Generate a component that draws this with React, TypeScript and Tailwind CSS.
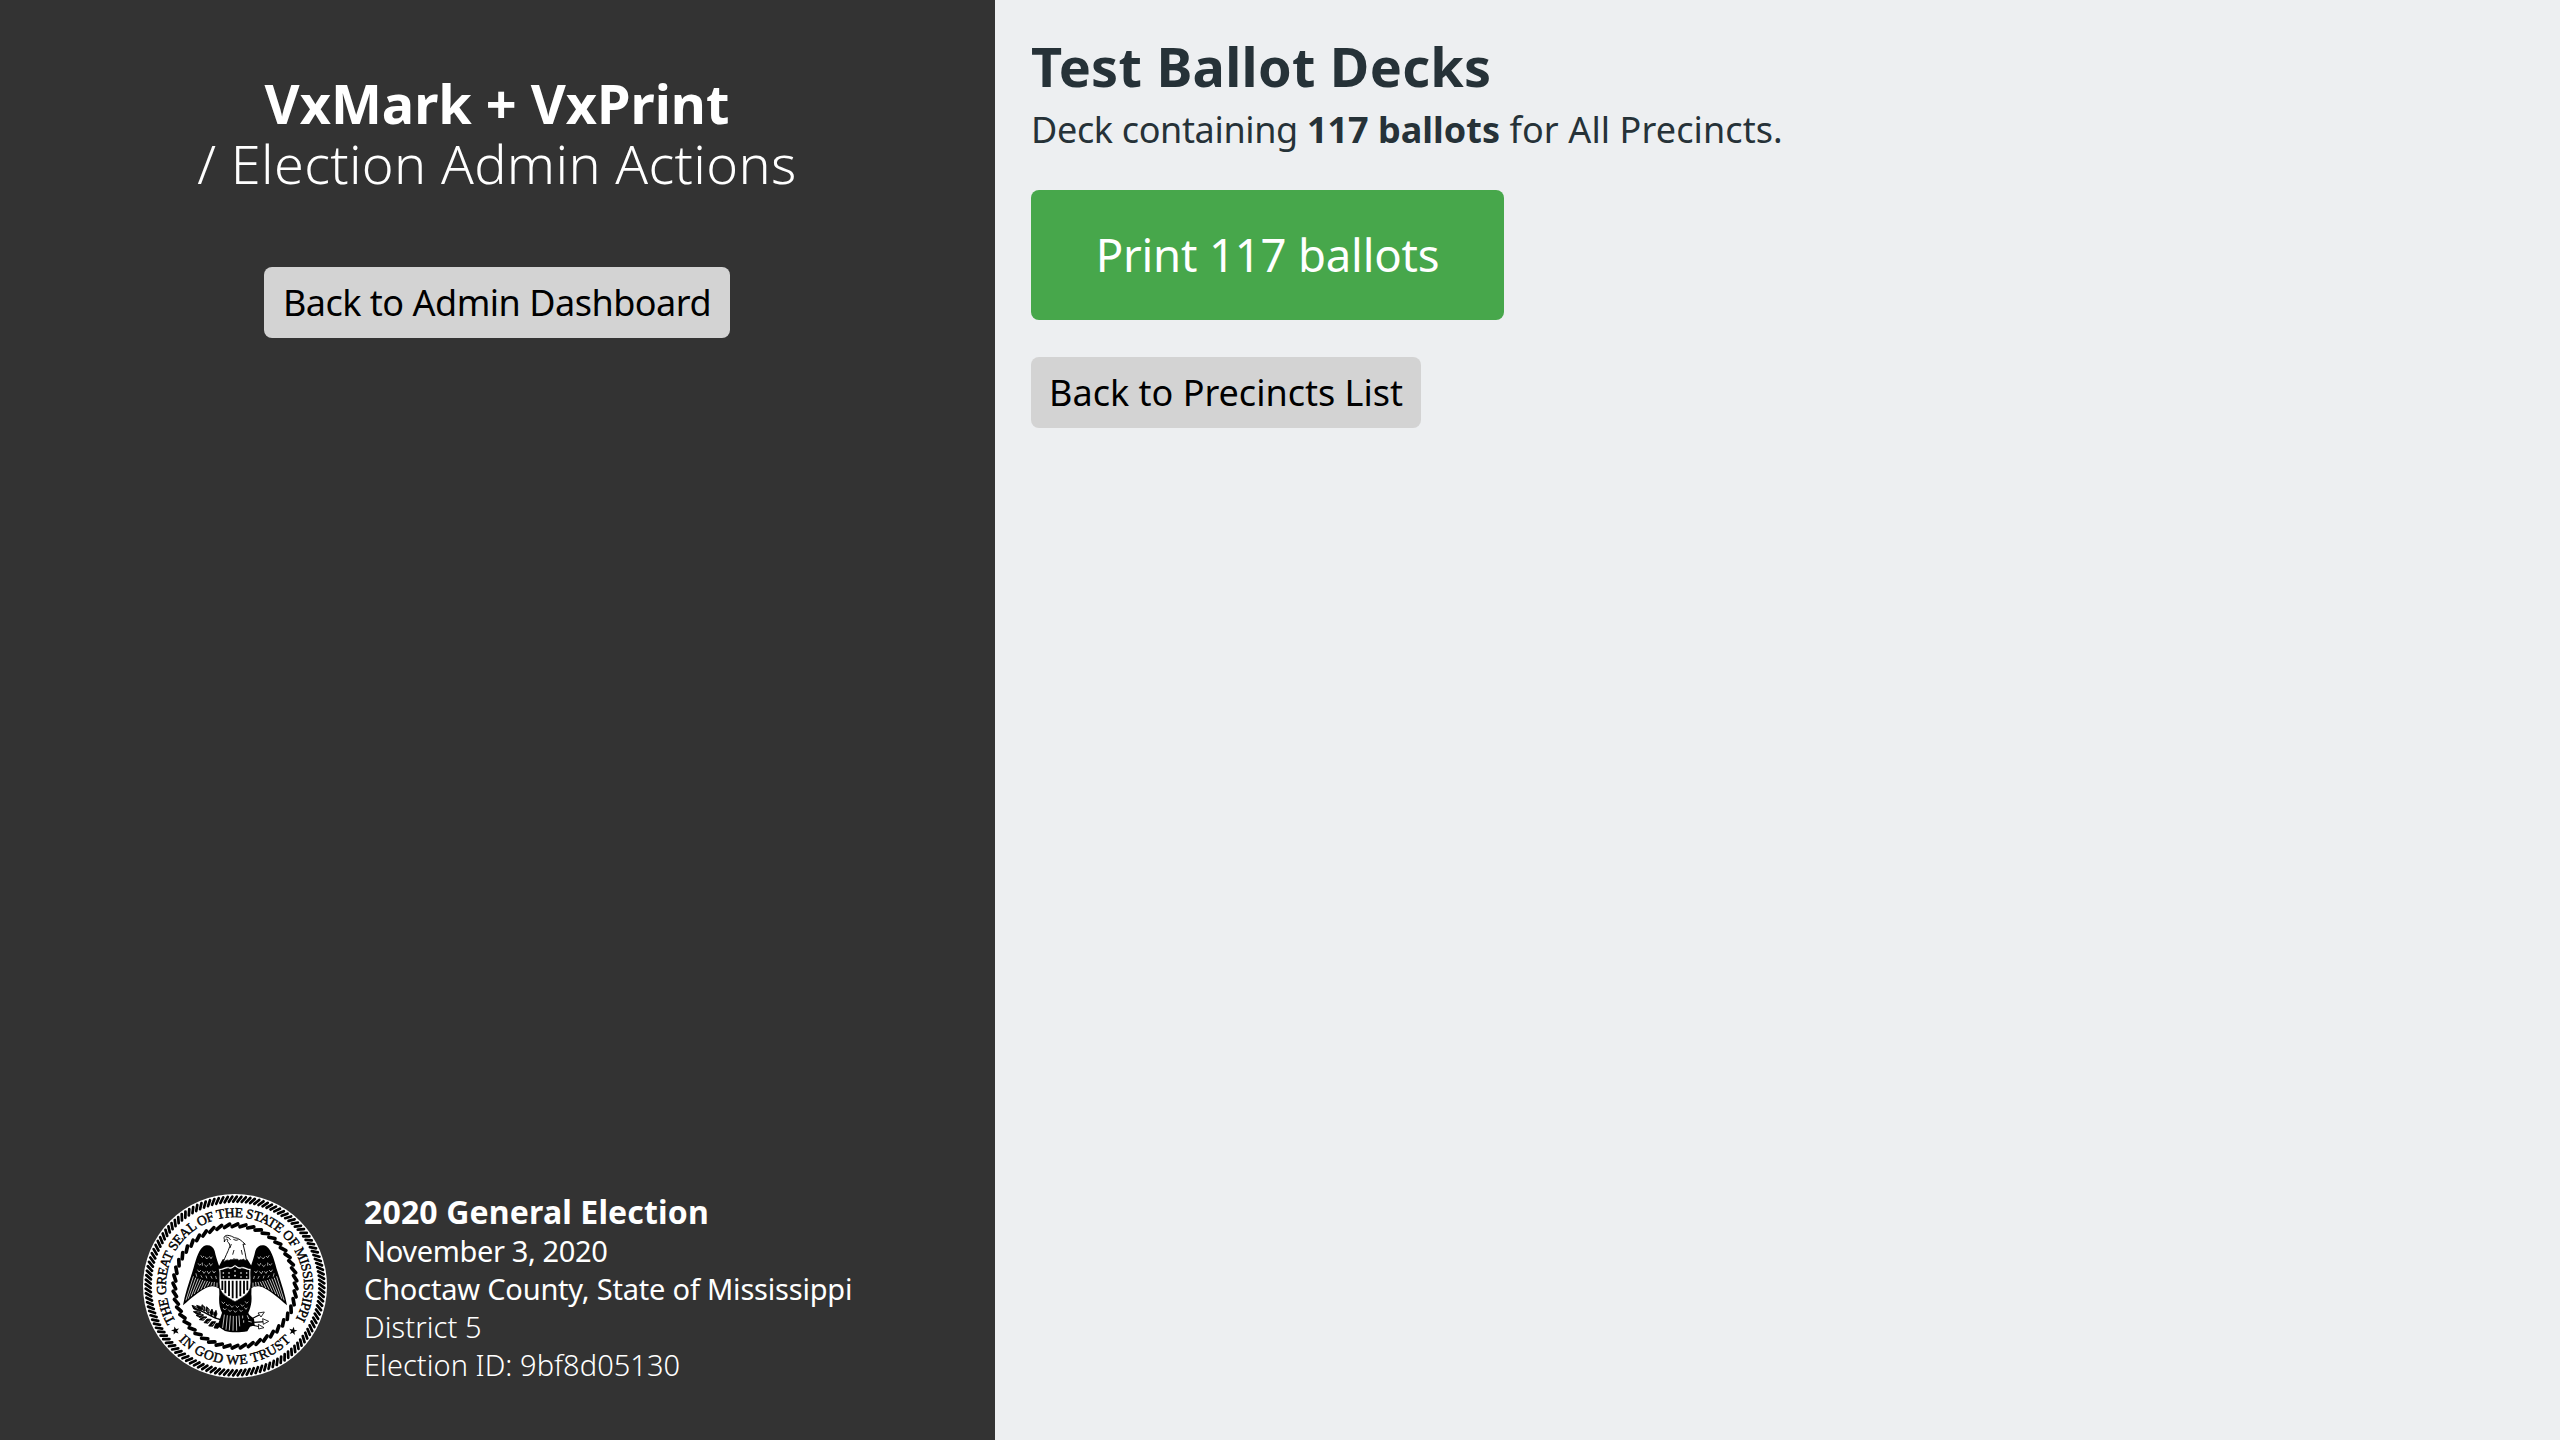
const outerRope = Array.from({ length: 124 }, (_, i) => (i * 360) / 124);
const innerRope = Array.from({ length: 48 }, (_, i) => (i * 360) / 48);

function Wing() {
  return (
    <g>
      <path
        d="M219 202C232 193 249 198 254 215C257 230 262 245 268 262L270 330C256 318 242 319 229 325C207 336 184 356 159 378C165 345 176 312 187 278C197 246 202 217 219 202Z"
        fill="#000"
      />
      {/* flight feathers */}
      <g stroke="#fff" strokeWidth="2.2" fill="none" strokeLinecap="round">
        <path d="M190 292L168 362M197 296L175 357M204 299L184 350M211 301L193 343M218 303L203 336M225 305L213 330M232 306L223 325M239 308L233 320M246 309L243 318M253 309L252 319M261 311L261 322" />
      </g>
      {/* covert feathers */}
      <g stroke="#fff" strokeWidth="1.9" fill="none" strokeLinecap="round">
        <path d="M213 229l4 6l4-4M226 233l4 6l4-4M239 232l4 6l3-5" />
        <path d="M205 253l4 5l4-4M217 251v7M224 257l5 5l4-5M238 252l4 7l5-5" />
        <path d="M203 272l4 6l5-5M218 276l4 6l4-5M232 276l4 7l5-6M248 275l4 6l4-5" />
        <path d="M198 283l2 8M213 289l3 5M228 290l2 6M243 291l3 6M257 291l2 7" />
      </g>
    </g>
  );
}

function StateSeal() {
  return (
    <svg viewBox="39 44 552 552" className="-mt-[5px] size-[184px] shrink-0" role="img" aria-label="Seal">
      <defs>
        <path id="seal-upper" d="M139.6 430.2A207 207 0 1 1 490.4 430.2" />
        <path id="seal-lower" d="M144.6 481.7A235 235 0 0 0 485.4 481.7" />
      </defs>
      <circle cx="315" cy="320" r="276" fill="#fff" />
      <g stroke="#000" strokeLinecap="round">
        {outerRope.map((a) => (
          <path key={a} d="M309.5 67L320.5 52" strokeWidth="8.2" transform={`rotate(${a} 315 320)`} />
        ))}
        {innerRope.map((a) => (
          <path key={a} d="M306.5 142L323.5 134" strokeWidth="11" transform={`rotate(${a} 315 320)`} />
        ))}
      </g>
      <g fontFamily="'Liberation Serif', serif" fontSize="41" fill="#000" stroke="#000" strokeWidth="1.3">
        <text>
          <textPath href="#seal-upper" startOffset="5" textLength="864" lengthAdjust="spacing">
            THE GREAT SEAL OF THE STATE OF MISSISSIPPI
          </textPath>
        </text>
        <text>
          <textPath href="#seal-lower" startOffset="2" textLength="376" lengthAdjust="spacing">
            IN GOD WE TRUST
          </textPath>
        </text>
      </g>
      <path
        d="M0-13L3.1-4.2L12.4-4L5 1.6L7.6 10.5L0 5.3L-7.6 10.5L-5 1.6L-12.4-4L-3.1-4.2Z"
        transform="translate(136 454) rotate(-12)"
      />
      <path
        d="M0-13L3.1-4.2L12.4-4L5 1.6L7.6 10.5L0 5.3L-7.6 10.5L-5 1.6L-12.4-4L-3.1-4.2Z"
        transform="translate(489 455) rotate(12)"
      />

      {/* olive branch */}
      <path d="M196 388C222 396 240 410 262 418L285 425" stroke="#000" strokeWidth="4" fill="none" />
      <path
        d="M186 378l14 5l5 10l-14-4zM200 378l12 4l3 11l-11-5zM216 376l9 8l-2 12l-9-8zM230 382l8 9l-3 12l-8-9zM246 389l4 11l-5 10l-6-10zM258 393l3 11l-5 11l-6-10zM190 397l14-3l9 6l-12 5zM198 408l13-5l10 4l-11 8zM208 421l10-9l13 1l-11 10zM222 430l9-11l13 1l-10 12zM236 440l9-13l12 0l-9 14zM252 446l6-14l14 0l-8 15z"
        fill="#000"
        stroke="#000"
        strokeWidth="2.5"
      />
      <path
        d="M194 382l9 6M219 382l2 9M234 389l0 9M200 398l8 0M206 409l9-2M217 420l9-3M231 429l8-4M246 438l5-6"
        stroke="#fff"
        strokeWidth="1.5"
      />

      {/* arrows */}
      <g stroke="#000" strokeWidth="2.5" fill="#fff">
        <path d="M352 425L392 405M355 430L405 427M352 434L392 443" strokeWidth="3.5" />
        <path d="M384 401L403 398L393 413ZM398 418L416 426L400 435ZM385 435L402 445L386 449Z" />
      </g>

      {/* body and tail */}
      <path
        d="M278 240L352 240L366 262L364 345C366 362 364 378 357 396C350 404 364 412 372 418L374 438L360 442L352 456C330 460 300 460 285 455L262 440L270 418L276 400C268 385 266 366 268 345L266 262Z"
        fill="#000"
      />
      <g stroke="#fff" strokeWidth="2.2" fill="none" strokeLinecap="round">
        <path d="M283 407L278 445M292 409L288 450M301 410L298 452M310 411L309 453M319 411L320 453M327 410L329 440" />
        <path
          d="M276 368l4 5l4-4M289 375l4 5l4-4M302 379l4 5l4-4M318 380l4 5l4-4M333 376l4 5l4-4M346 367l4 5l4-4M280 387l4 5l4-4M296 392l4 5l4-4M312 394l4 5l4-4M329 392l4 5l4-4M344 385l4 5l3-4"
          strokeWidth="1.9"
        />
        <path d="M338 410v6M352 409l4 9M341 424v5M356 426l8 2" />
      </g>

      <Wing />
      <g transform="matrix(-1 0 0 1 630 0)">
        <Wing />
      </g>

      {/* head and neck */}
      <path
        d="M283 180C280 172 285 168 293 168C303 169 307 172 313 175C327 176 334 184 346 195L339 194C344 212 347 228 350 247C345 240 343 245 340 239C335 246 331 238 327 244C322 236 317 243 312 238C307 245 302 238 297 244C292 240 286 244 279 251C284 234 294 218 299 202C300 196 298 191 294 189C290 187 296 182 292 180C288 178 285 182 283 188Z"
        fill="#fff"
        stroke="#000"
        strokeWidth="2.8"
        strokeLinejoin="round"
      />
      <path
        d="M286 172L296 175L302 182M310 180L318 183L325 181M304 194l-4 12M312 212l-4 14M334 212l3 14"
        stroke="#000"
        strokeWidth="2.6"
        fill="none"
      />

      {/* shield */}
      <path
        d="M266 268C280 268 286 259 298 263C305 265 310 258 315 256C320 258 325 265 332 263C344 259 350 268 363 268C360 285 365 305 361 325C355 347 334 356 315 367C296 356 275 347 269 325C265 305 270 285 266 268Z"
        fill="#fff"
        stroke="#000"
        strokeWidth="2"
      />
      <path d="M271 272C284 272 289 264 299 268C306 269 311 264 315 261C319 264 324 269 331 268C341 264 346 272 358 272L358 300L272 300Z" />
      <path
        d="M277 304V332M286 304V342M297 304V350M308 304V357M320 304V357M331 304V351M342 304V343M352 304V333"
        stroke="#000"
        strokeWidth="5.5"
      />
      <path
        d="M280 281h.1M297 281h.1M315 275h.1M333 281h.1M350 281h.1M280 293h.1M297 293h.1M315 289h.1M333 293h.1M350 293h.1"
        stroke="#fff"
        strokeWidth="5"
        strokeLinecap="round"
      />
    </svg>
  );
}

export default function App() {
  return (
    <div className="flex h-screen w-full overflow-hidden bg-[#edeff1] font-['Noto_Sans',sans-serif] text-[#263238]">
      <aside className="flex w-[995px] shrink-0 flex-col bg-[#333333] text-white">
        <div className="flex flex-1 flex-col items-center pt-[73px] pr-px">
          <h1 className="mb-[74px] text-center text-[54px] leading-[60px]">
            <span className="block font-bold">VxMark + VxPrint</span>
            <span className="block font-light tracking-[0.35px]">/ Election Admin Actions</span>
          </h1>
          <button className="h-[71px] w-[466px] rounded-lg bg-[#d3d3d3] text-[36px] leading-none tracking-[-0.5px] whitespace-nowrap text-black">
            Back to Admin Dashboard
          </button>
        </div>
        <footer className="mb-14 flex items-center pl-[143px]">
          <StateSeal />
          <div className="ml-[37px] text-[29px] leading-[38px] whitespace-nowrap">
            <p className="-mt-px mb-px text-[32px] leading-[39px] font-bold tracking-[0.15px]">2020 General Election</p>
            <p className="tracking-[-0.35px]">November 3, 2020</p>
            <p className="tracking-[-0.2px]">Choctaw County, State of Mississippi</p>
            <p className="font-light tracking-[0.1px]">District 5</p>
            <p className="font-light tracking-[0.05px]">Election ID: 9bf8d05130</p>
          </div>
        </footer>
      </aside>
      <main className="flex flex-1 flex-col items-start pt-9 pl-9">
        <h1 className="text-[54px] leading-[60px] font-bold tracking-[0.25px]">Test Ballot Decks</h1>
        <p className="mt-[5px] mb-[31px] text-[36px] leading-[58px]">
          <span className="tracking-[-0.35px]">Deck containing </span>
          <strong className="font-bold">117 ballots</strong>
          <span className="tracking-[0.1px]"> for All Precincts.</span>
        </p>
        <button className="mb-[37px] h-[130px] w-[473px] rounded-lg bg-[#47a74b] text-[45.5px] leading-none tracking-[-0.2px] whitespace-nowrap text-white">
          Print 117 ballots
        </button>
        <button className="h-[71px] w-[390px] rounded-lg bg-[#d3d3d3] text-[36px] leading-none whitespace-nowrap text-black">
          Back to Precincts List
        </button>
      </main>
    </div>
  );
}
